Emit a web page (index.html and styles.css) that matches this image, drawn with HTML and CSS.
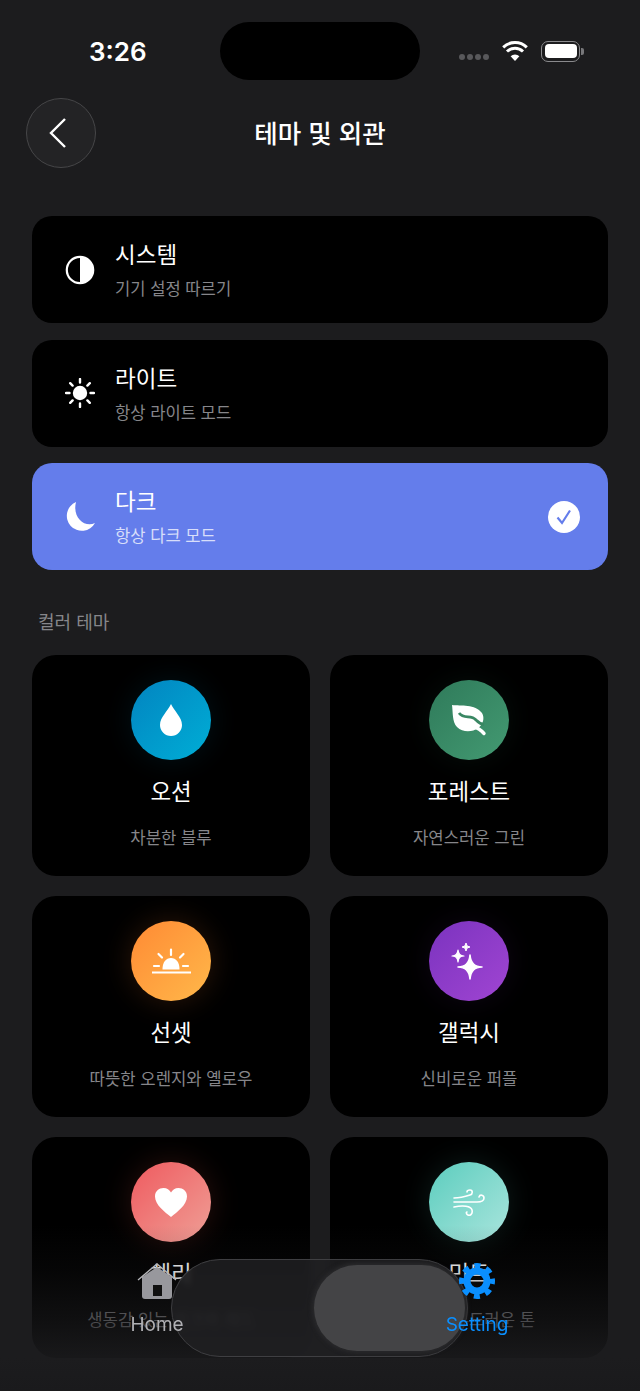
FILE: index.html

```html
<!DOCTYPE html>
<html lang="ko">
<head>
    <meta charset="UTF-8">
    <meta name="viewport" content="width=device-width, initial-scale=1.0">
    <title>테마 및 외관</title>
    <link rel="stylesheet" href="styles.css">
</head>
<body>
    <div class="screen">
        <div class="status-bar">
            <span class="time">3:26</span>
            <div class="island"></div>
            <div class="status-icons">
                <div class="signal"><i></i><i></i><i></i><i></i></div>
                <svg class="wifi" viewBox="0 0 26 20">
                    <path d="M13 20 L8.6 15.2 A6.4 6.4 0 0 1 17.4 15.2 Z" fill="#fff"/>
                    <path d="M5 10.5 A11.5 11.5 0 0 1 21 10.5" fill="none" stroke="#fff" stroke-width="3"/>
                    <path d="M1.2 6.3 A17 17 0 0 1 24.8 6.3" fill="none" stroke="#fff" stroke-width="3"/>
                </svg>
                <div class="battery"><div class="battery-level"></div></div>
                <div class="battery-nub"></div>
            </div>
        </div>

        <div class="header">
            <button class="back-btn">
                <svg viewBox="0 0 20 32" width="20" height="32">
                    <path d="M17 2 L3 16 L17 30" fill="none" stroke="#fff" stroke-width="2.4"/>
                </svg>
            </button>
            <h1>테마 및 외관</h1>
        </div>

        <div class="mode-list">
            <div class="mode-item">
                <svg class="mode-icon" viewBox="0 0 30 30">
                    <circle cx="15" cy="15" r="13.2" fill="none" stroke="#fff" stroke-width="2.2"/>
                    <path d="M15 1.8 A13.2 13.2 0 0 1 15 28.2 Z" fill="#fff"/>
                </svg>
                <div class="mode-text">
                    <div class="mode-title">시스템</div>
                    <div class="mode-sub">기기 설정 따르기</div>
                </div>
            </div>
            <div class="mode-item">
                <svg class="mode-icon" viewBox="0 0 30 30">
                    <circle cx="15" cy="15" r="7.2" fill="#fff"/>
                    <path d="M15 1 V4.5 M15 25.5 V29 M1 15 H4.5 M25.5 15 H29 M5.2 5.2 L7.6 7.6 M22.4 22.4 L24.8 24.8 M5.2 24.8 L7.6 22.4 M22.4 7.6 L24.8 5.2" stroke="#fff" stroke-width="2.4" stroke-linecap="round"/>
                </svg>
                <div class="mode-text">
                    <div class="mode-title">라이트</div>
                    <div class="mode-sub">항상 라이트 모드</div>
                </div>
            </div>
            <div class="mode-item selected">
                <svg class="mode-icon" viewBox="0 0 30 30">
                    <path d="M11 0 A15 15 0 1 0 30 21 C20 26 7 16 11 0 Z" fill="#fff"/>
                </svg>
                <div class="mode-text">
                    <div class="mode-title">다크</div>
                    <div class="mode-sub">항상 다크 모드</div>
                </div>
                <div class="check">
                    <svg viewBox="0 0 32 32" width="32" height="32">
                        <path d="M9.5 16.5 L14 22 L22 9.5" fill="none" stroke="#647deb" stroke-width="2.2"/>
                    </svg>
                </div>
            </div>
        </div>

        <div class="section-label">컬러 테마</div>

        <div class="theme-grid">
            <div class="theme-card">
                <div class="theme-icon ocean">
                    <svg viewBox="0 0 22 32" width="22" height="32">
                        <path d="M11 0 C14 7 22 13 22 21 A11 11 0 0 1 0 21 C0 13 8 7 11 0 Z" fill="#fff"/>
                    </svg>
                </div>
                <div class="theme-name">오션</div>
                <div class="theme-sub">차분한 블루</div>
            </div>
            <div class="theme-card">
                <div class="theme-icon forest">
                    <svg viewBox="0 0 36 36" width="36" height="36">
                        <path d="M1 3 C10 4 24 2 31 11 C34 16 32 23 27 26 C22 30 12 31 6 25 C1 20 2 10 1 3 Z" fill="#fff"/>
                        <path d="M8 11 C13 18 20 12 25 18 C27 20 29 22 33 22.5" fill="none" stroke="#3a8763" stroke-width="2.8"/>
                        <path d="M23 25 C27 26 29 27 33 31.5" fill="none" stroke="#fff" stroke-width="3.4" stroke-linecap="round"/>
                    </svg>
                </div>
                <div class="theme-name">포레스트</div>
                <div class="theme-sub">자연스러운 그린</div>
            </div>
            <div class="theme-card">
                <div class="theme-icon sunset">
                    <svg class="sunset-art" viewBox="0 0 40 30" width="40" height="30">
                        <path d="M11.5 21.5 C11.5 14 15 10 20 10 C25 10 28.5 14 28.5 21.5 Z" fill="#fff"/>
                        <path d="M1 24.5 H40" stroke="#fff" stroke-width="2"/>
                        <path d="M20 1.5 V7 M7.5 6 L11 9.5 M32.5 6 L29 9.5 M3 18 H8 M32 18 H37" stroke="#fff" stroke-width="2.2" stroke-linecap="round"/>
                    </svg>
                </div>
                <div class="theme-name">선셋</div>
                <div class="theme-sub">따뜻한 오렌지와 옐로우</div>
            </div>
            <div class="theme-card">
                <div class="theme-icon galaxy">
                    <svg viewBox="0 0 36 38" width="36" height="38">
                        <path d="M19 13 Q20 25 31 25 Q20 25 19 37 Q18 25 7 25 Q18 25 19 13 Z" fill="#fff" stroke="#fff" stroke-width="1.6" stroke-linejoin="round"/>
                        <path d="M7 8 Q7.5 14 13 14 Q7.5 14 7 20 Q6.5 14 1 14 Q6.5 14 7 8 Z" fill="#fff" stroke="#fff" stroke-width="1.2" stroke-linejoin="round"/>
                        <path d="M15 1 Q15.3 5 19 5 Q15.3 5 15 9 Q14.7 5 11 5 Q14.7 5 15 1 Z" fill="#fff" stroke="#fff" stroke-width="1" stroke-linejoin="round"/>
                    </svg>
                </div>
                <div class="theme-name">갤럭시</div>
                <div class="theme-sub">신비로운 퍼플</div>
            </div>
            <div class="theme-card">
                <div class="theme-icon cherry">
                    <svg viewBox="0 0 32 29" width="32" height="29">
                        <path d="M16 29 C10 24 0 17 0 8.5 C0 3 4 0 8.5 0 C12 0 14.5 2 16 4.5 C17.5 2 20 0 23.5 0 C28 0 32 3 32 8.5 C32 17 22 24 16 29 Z" fill="#fff"/>
                    </svg>
                </div>
                <div class="theme-name">체리</div>
                <div class="theme-sub">생동감 있는 핑크와 레드</div>
            </div>
            <div class="theme-card">
                <div class="theme-icon mint">
                    <svg viewBox="0 0 32 27" width="32" height="27">
                        <path d="M1 9 C8 9 14 7 17 6 C20 5 20 1 17 1 C15 1 14 2 14 3 M1 13 H24 C28 13 31 12 31 9 C31 6 27 5 26 8 M1 18 C10 16 18 17 19 21 C20 25 17 27 15 26 C13 25 13 23 14 23" fill="none" stroke="#fff" stroke-width="1.6" stroke-linecap="round"/>
                    </svg>
                </div>
                <div class="theme-name">민트</div>
                <div class="theme-sub">상쾌한 부드러운 톤</div>
            </div>
        </div>

        <div class="bottom-fade"></div>

        <div class="tabbar">
            <div class="glass"><div class="thumb"></div></div>
            <div class="tab">
                <svg class="tab-icon" viewBox="0 0 40 36" width="40" height="36">
                    <path d="M5 14 L20 4 L35 14 V33 A3 3 0 0 1 32 36 H8 A3 3 0 0 1 5 33 Z" fill="#98989d"/>
                    <path d="M1 17 L20 1 L39 17" fill="none" stroke="#b5b5b8" stroke-width="1.4"/>
                    <rect x="16" y="22" width="9" height="11" fill="#111"/>
                </svg>
                <span class="tab-label">Home</span>
            </div>
            <div class="tab active">
                <svg class="tab-icon" viewBox="0 0 36 36" width="36" height="36">
                    <circle cx="18" cy="18" r="10" fill="none" stroke="#0a8fff" stroke-width="7"/>
                    <circle cx="18" cy="18" r="15" fill="none" stroke="#0a8fff" stroke-width="6" stroke-dasharray="6 5.78" stroke-dashoffset="3"/>
                </svg>
                <span class="tab-label">Setting</span>
            </div>
        </div>
    </div>
</body>
</html>
```

FILE: styles.css

```css
* {
    box-sizing: border-box;
}
body {
    margin: 0;
    background-color: #1c1c1e;
    font-family: "Noto Sans CJK KR", "Noto Sans", sans-serif;
    color: #fff;
}
.screen {
    position: relative;
    width: 640px;
    height: 1391px;
    overflow: hidden;
}

/* status bar */
.status-bar {
    display: grid;
    grid-template-columns: 1fr 200px 1fr;
    align-items: center;
    height: 58px;
    margin-top: 22px;
}
.time {
    padding-left: 89px;
    font-family: "Inter", sans-serif;
    font-size: 26px;
    font-weight: 600;
}
.island {
    height: 58px;
    background-color: #000;
    border-radius: 29px;
}
.status-icons {
    display: flex;
    align-items: center;
    padding-left: 39px;
}
.signal {
    display: flex;
    gap: 2px;
    margin-top: 12px;
}
.signal i {
    width: 6px;
    height: 6px;
    border-radius: 3px;
    background-color: #58585b;
}
.wifi {
    width: 26px;
    height: 20px;
    margin-left: 13px;
}
.battery {
    width: 39px;
    height: 21px;
    margin-left: 13px;
    padding: 2.5px;
    border: 1.5px solid #8a8a8d;
    border-radius: 7px;
}
.battery-level {
    height: 100%;
    background-color: #fff;
    border-radius: 4px;
}
.battery-nub {
    width: 3px;
    height: 7px;
    margin-left: 1px;
    background-color: #77777a;
    border-radius: 0 2px 2px 0;
}

/* header */
.header {
    display: grid;
    grid-template-columns: 70px 1fr 70px;
    align-items: center;
    height: 70px;
    margin-top: 18px;
    padding: 0 26px;
}
.back-btn {
    display: flex;
    align-items: center;
    justify-content: center;
    width: 70px;
    height: 70px;
    padding: 0 6px 0 0;
    background-color: #232325;
    border: 1.5px solid #464648;
    border-radius: 50%;
}
h1 {
    margin: -4px 0 0;
    text-align: center;
    font-size: 25.5px;
    font-weight: 500;
}

/* light / dark mode */
.mode-list {
    display: flex;
    flex-direction: column;
    gap: 16.5px;
    margin: 48px 32px 0;
}
.mode-item {
    display: flex;
    align-items: center;
    height: 107px;
    padding: 0 28px 0 33px;
    background-color: #000;
    border-radius: 20px;
}
.mode-item.selected {
    background-color: #647deb;
}
.mode-icon {
    width: 30px;
    height: 30px;
    flex-shrink: 0;
}
.mode-text {
    flex: 1;
    margin-left: 20px;
    margin-top: -2px;
}
.mode-title {
    font-size: 22.5px;
    line-height: 30px;
}
.mode-sub {
    margin-top: 9px;
    font-size: 16.6px;
    line-height: 22px;
    color: #86868a;
}
.selected .mode-sub {
    color: rgba(255, 255, 255, 0.75);
}
.check {
    display: flex;
    width: 32px;
    height: 32px;
    background-color: #fff;
    border-radius: 50%;
}

.section-label {
    margin: 38px 0 0 38px;
    font-size: 18px;
    line-height: 26px;
    color: #86868a;
}

/* colour themes */
.theme-grid {
    display: grid;
    grid-template-columns: 1fr 1fr;
    gap: 20px;
    margin: 21px 32px 0;
}
.theme-card {
    display: flex;
    flex-direction: column;
    align-items: center;
    height: 221px;
    padding-top: 25px;
    background-color: #000;
    border-radius: 24px;
}
.theme-icon {
    display: flex;
    align-items: center;
    justify-content: center;
    width: 80px;
    height: 80px;
    border-radius: 50%;
}
.sunset-art {
    margin-top: 4px;
}
.ocean {
    background: linear-gradient(135deg, #0284c0, #00aed6);
    box-shadow: 0 0 30px rgba(2, 150, 200, 0.12);
}
.forest {
    background: linear-gradient(135deg, #2f7a5a, #439a72);
    box-shadow: 0 0 30px rgba(60, 150, 110, 0.1);
}
.sunset {
    background: linear-gradient(135deg, #ff8a34, #ffb84a);
    box-shadow: 0 0 30px rgba(255, 130, 50, 0.18);
}
.galaxy {
    background: linear-gradient(135deg, #7b33bf, #a045d2);
    box-shadow: 0 0 30px rgba(140, 60, 200, 0.1);
}
.cherry {
    background: linear-gradient(135deg, #ef5a5f, #ef9f96);
    box-shadow: 0 0 30px rgba(240, 90, 70, 0.18);
}
.mint {
    background: linear-gradient(135deg, #5ccdbe, #aae5dd);
    box-shadow: 0 0 30px rgba(90, 205, 190, 0.14);
}
.theme-name {
    margin-top: 14px;
    font-size: 22.4px;
    line-height: 32px;
}
.theme-sub {
    margin-top: 19px;
    font-size: 16.7px;
    line-height: 24px;
    color: #86868a;
}

/* tab bar, floats over the content */
.bottom-fade {
    position: absolute;
    left: 0;
    right: 0;
    bottom: 0;
    height: 166px;
    background: linear-gradient(to bottom, rgba(28, 28, 30, 0) 0%, rgba(28, 28, 30, 0.2) 27%, rgba(28, 28, 30, 0.55) 57%, rgba(28, 28, 30, 0.87) 80%, #1a1a1c 100%);
}
.tabbar {
    position: absolute;
    left: 0;
    right: 0;
    top: 1259px;
    display: flex;
    justify-content: space-between;
    height: 98px;
    padding: 0 113px 0 107px;
}
.glass {
    position: absolute;
    left: 171px;
    top: 0;
    display: flex;
    justify-content: flex-end;
    width: 297px;
    height: 98px;
    padding: 5px 2px 5px 0;
    background-color: rgba(32, 32, 34, 0.85);
    border: 1.5px solid #3f3f42;
    border-radius: 49px;
    backdrop-filter: blur(3px);
}
.thumb {
    width: 151px;
    height: 86px;
    background-color: #444446;
    border-radius: 43px;
    box-shadow: 0 0 4px 2px #2a2a2c;
}
.tab {
    position: relative;
    display: flex;
    flex-direction: column;
    align-items: center;
    width: 100px;
    height: 77px;
    padding-top: 4px;
}
.tab-icon {
    flex-shrink: 0;
}
.tab-label {
    margin-top: auto;
    font-family: "Inter", sans-serif;
    font-size: 19px;
    line-height: 22px;
    color: #b0b0b4;
}
.tab.active .tab-label {
    color: #0a8fff;
}
```
